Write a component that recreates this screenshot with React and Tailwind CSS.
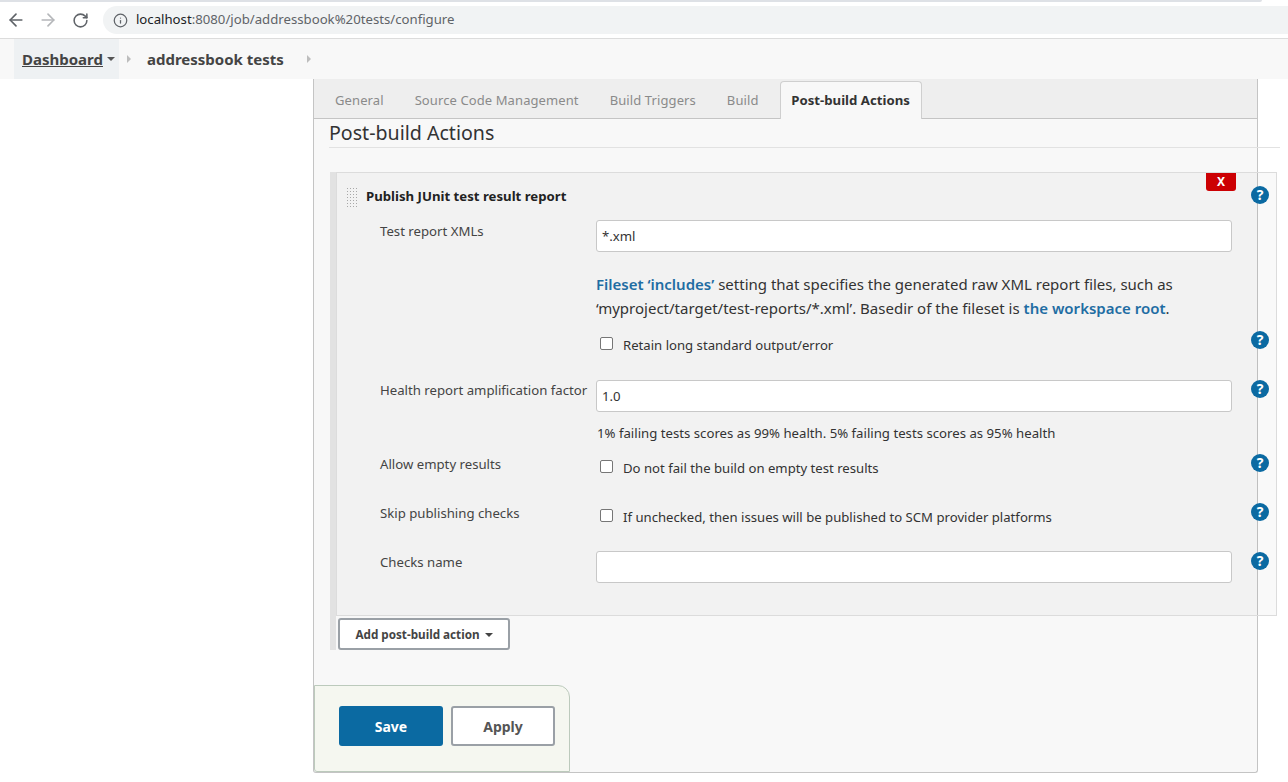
import { ArrowLeft, ArrowRight, RotateCw, Info } from 'lucide-react';

const tabs = ['General', 'Source Code Management', 'Build Triggers', 'Build'];

function HelpIcon() {
  return (
    <span className="flex h-[18px] w-[18px] items-center justify-center rounded-full bg-[#0b6aa2] text-[14px] font-bold leading-none text-white">?</span>
  );
}

function Caret({ className }) {
  return <span className={`inline-block h-0 w-0 border-x-[4px] border-t-[4px] border-x-transparent ${className}`} />;
}

function Chevron({ className }) {
  return <span className={`inline-block h-0 w-0 border-y-[4px] border-l-[4px] border-y-transparent border-l-[#bdbdbd] ${className}`} />;
}

function Row({ label, height, labelTop = 0, helpTop = 0, help = true, children }) {
  return (
    <div className="flex" style={{ height }}>
      <div className="w-[259px] shrink-0 pl-[43px] text-[13.2px] leading-[20px] text-[#444] whitespace-nowrap" style={{ paddingTop: labelTop }}>{label}</div>
      <div className="w-[636px] shrink-0">{children}</div>
      <div className="ml-[19px]" style={{ marginTop: helpTop }}>{help && <HelpIcon />}</div>
    </div>
  );
}

function TextInput({ value }) {
  return (
    <input
      readOnly
      value={value}
      className="h-[32px] w-full rounded-[3px] border border-[#c8c8c8] bg-white px-[5px] text-[13.2px] text-[#333] outline-none"
    />
  );
}

function CheckLine({ text }) {
  return (
    <label className="flex items-center text-[13.15px] leading-[20px] text-[#333]">
      <span className="mb-[4px] ml-[4px] h-[13px] w-[13px] rounded-[2px] border border-[#767676] bg-white" />
      <span className="ml-[10px]">{text}</span>
    </label>
  );
}

export default function App() {
  return (
    <div className="h-[782px] w-[1288px] overflow-hidden bg-white font-['Noto_Sans','Open_Sans',sans-serif]">
      <div className="h-[2px] w-[1262px] rounded-br-[4px] bg-[#dee1e6]" />
      {/* browser toolbar */}
      <div className="flex h-[37px] items-center border-b border-[#dcdcdc] bg-white pl-[6px]">
        <ArrowLeft size={20} strokeWidth={2} className="text-[#5f6368]" />
        <ArrowRight size={20} strokeWidth={2} className="ml-[12px] text-[#b5b7ba]" />
        <RotateCw size={17} strokeWidth={2.2} className="ml-[14px] text-[#5f6368]" />
        <div className="ml-[14px] flex h-[28px] w-[1186px] items-center rounded-l-[14px] bg-[#f1f3f4] pl-[10px] text-[13.2px] text-[#202124]">
          <Info size={15} className="text-[#5f6368]" />
          <span className="ml-[8px]">localhost<span className="text-[#5f6368]">:8080/job/addressbook%20tests/configure</span></span>
        </div>
      </div>
      {/* breadcrumb */}
      <div className="flex h-[40px] items-center bg-[#f8f8f8] text-[15px] font-bold text-[#444]">
        <div className="ml-[14px] flex h-full w-[105px] items-center bg-[#eef1f3] pl-[8px]">
          <span className="underline">Dashboard</span>
          <Caret className="ml-[4px] border-t-[#555]" />
        </div>
        <Chevron className="ml-[8px]" />
        <span className="ml-[16px]">addressbook tests</span>
        <Chevron className="ml-[23px]" />
      </div>
      {/* config panel */}
      <div className="ml-[313px] h-[694px] w-[945px] rounded-b-[3px] border-x border-b border-[#c4c4c4] bg-[#f8f8f8]">
        <div className="flex h-[40px] items-end border-b border-[#c4c4c4] bg-[#eeeeee] pl-[5.5px]">
          {tabs.map((t) => (
            <div key={t} className="flex h-[37px] items-center px-[15.5px] pt-[3px] text-[13px] tracking-[0.1px] text-[#8a8a8a]">{t}</div>
          ))}
          <div className="-mb-px ml-[5.5px] flex h-[38px] w-[142px] items-center justify-center rounded-t-[4px] border-x border-t border-[#cfcfcf] bg-[#f8f8f8] pt-[1px] text-[13.2px] font-bold text-[#333]">Post-build Actions</div>
        </div>
        <div className="w-[966px] pl-[15px]">
          <div className="flex h-[29px] items-center border-b border-[#e2e2e2] text-[19.6px] text-[#333]">Post-build Actions</div>
        </div>
        <div className="mt-[24px] ml-[16px] w-[947px] border-l-[6px] border-[#e2e2e2]">
          <div className="relative h-[444px] border border-[#dcdcdc] bg-black/[0.025] pt-[14px]">
            <button className="absolute top-0 right-[40px] flex h-[18px] w-[30px] items-center justify-center rounded-b-[3px] bg-[#cc0003] text-[12px] font-bold text-white">X</button>
            <div className="flex h-[20px] items-center pl-[9px]">
              <span className="h-[20px] w-[12px] bg-[radial-gradient(#a8a8a8_1px,transparent_1px)] bg-[length:3px_3px]" />
              <span className="ml-[8px] text-[13.2px] font-bold text-[#222]">Publish JUnit test result report</span>
              <span className="absolute top-[13px] right-[7px]"><HelpIcon /></span>
            </div>
            <div className="mt-[13px]">
              <Row label="Test report XMLs" height={0} labelTop={1} help={false}><TextInput value="*.xml" /></Row>
            </div>
            <div className="pt-[33px]">
              <div className="ml-[259px] h-[82px] pt-[19px] text-[15px] leading-[24px] whitespace-nowrap text-[#333]">
                <div><span className="font-semibold text-[#1f6da3]">Fileset ‘includes’</span> setting that specifies the generated raw XML report files, such as</div>
                <div>‘myproject/target/test-reports/*.xml’. Basedir of the fileset is <span className="font-semibold text-[#1f6da3]">the workspace root</span>.</div>
              </div>
            </div>
            <Row height={34} helpTop={-4}><CheckLine text="Retain long standard output/error" /></Row>
            <Row label="Health report amplification factor" height={46} labelTop={11} helpTop={11}>
              <div className="pt-[11px]"><TextInput value="1.0" /></div>
            </Row>
            <Row height={23} help={false}>
              <div className="pt-[8px] pl-[1px] text-[13.2px] leading-[20px] text-[#333]">1% failing tests scores as 99% health. 5% failing tests scores as 95% health</div>
            </Row>
            <Row label="Allow empty results" height={49} labelTop={16} helpTop={16}>
              <div className="pt-[20px]"><CheckLine text="Do not fail the build on empty test results" /></div>
            </Row>
            <Row label="Skip publishing checks" height={49} labelTop={16} helpTop={16}>
              <div className="pt-[20px]"><CheckLine text="If unchecked, then issues will be published to SCM provider platforms" /></div>
            </Row>
            <Row label="Checks name" height={49} labelTop={16} helpTop={16}>
              <div className="pt-[15px]"><TextInput value="" /></div>
            </Row>
          </div>
          <div className="flex h-[34px] items-end pl-[2px]">
            <button className="flex h-[32px] w-[172px] items-center justify-center rounded-[3px] border-2 border-[#9aa0a6] bg-white pt-[1px] text-[11.7px] font-bold text-[#444]">
              Add post-build action
              <Caret className="ml-[5px] border-t-[#444]" />
            </button>
          </div>
        </div>
        <div className="mt-[35px] flex h-[87px] w-[256px] items-start gap-[8px] rounded-tr-[12px] rounded-bl-[3px] border border-[#bccabc] bg-[#f5f7f0] pt-[20px] pl-[24px]">
          <button className="h-[40px] w-[104px] rounded-[3px] bg-[#0b6aa2] text-[14px] font-bold text-white">Save</button>
          <button className="h-[40px] w-[104px] rounded-[3px] border-2 border-[#9aa0a6] bg-white text-[14px] font-bold text-[#555]">Apply</button>
        </div>
      </div>
    </div>
  );
}
